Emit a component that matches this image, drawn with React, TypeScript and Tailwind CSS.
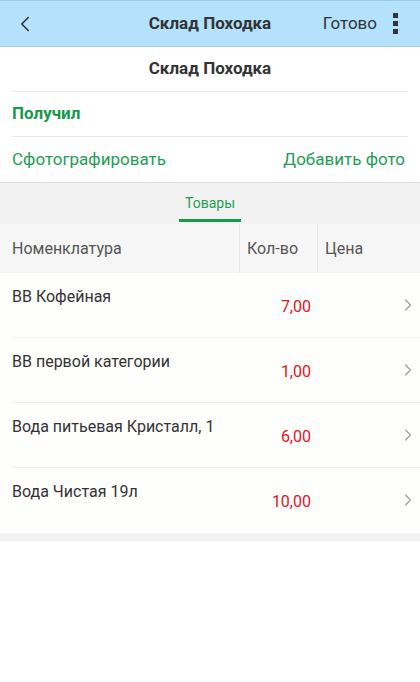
import { ChevronLeft, ChevronRight } from "lucide-react";

const items = [
  { name: "ВВ Кофейная", qty: "7,00" },
  { name: "ВВ первой категории", qty: "1,00" },
  { name: "Вода питьевая Кристалл, 1", qty: "6,00" },
  { name: "Вода Чистая 19л", qty: "10,00" },
];

export default function App() {
  return (
    <div className="min-h-[682px] w-[420px] bg-white font-['Roboto',sans-serif] text-[#333]">
      {/* toolbar */}
      <div className="grid h-[47px] grid-cols-[1fr_auto_1fr] items-center border-t border-b border-t-[#9ccbe8] border-b-[#a4cde6] bg-[#b4e1fc] px-3">
        <ChevronLeft size={26} strokeWidth={1.5} className="text-[#333]" />
        <div className="text-[17px] font-bold text-[#333]">Склад Походка</div>
        <div className="flex items-center justify-end">
          <span className="text-[17px] text-[#333]">Готово</span>
          <div className="ml-[16px] mr-[10px] flex flex-col gap-[3px]">
            <span className="block h-[5px] w-[5px] bg-[#333]" />
            <span className="block h-[5px] w-[5px] bg-[#333]" />
            <span className="block h-[5px] w-[5px] bg-[#333]" />
          </div>
        </div>
      </div>

      {/* doc info */}
      <div className="px-3">
        <div className="flex h-[45px] items-center justify-center border-b border-[#e8e8e8] text-[17px] font-bold">
          Склад Походка
        </div>
        <div className="flex h-[45px] items-center border-b border-[#e8e8e8] text-[17px] font-bold text-[#15994b]">
          Получил
        </div>
        <div className="flex h-[45px] items-center justify-between pr-[3px] text-[17px] text-[#1e9d55]">
          <span>Сфотографировать</span>
          <span>Добавить фото</span>
        </div>
      </div>

      {/* tabs */}
      <div className="flex h-[42px] justify-center border-t border-[#dedede] bg-[#f2f2f2]">
        <div className="flex flex-col items-center justify-end">
          <span className="px-[6px] pb-[5px] text-[14px] text-[#1e9d55]">Товары</span>
          <span className="mb-[2px] block h-[3px] w-[62px] bg-[#16994b]" />
        </div>
      </div>

      {/* table head */}
      <div className="flex h-[49px] items-center bg-[#f6f6f6] text-[16px] text-[#555]">
        <div className="flex h-full w-[240px] items-center border-r border-[#e6e6e6] pl-3">Номенклатура</div>
        <div className="flex h-full w-[78px] items-center border-r border-[#e6e6e6] pl-[7px]">Кол-во</div>
        <div className="flex h-full flex-1 items-center pl-[7px]">Цена</div>
      </div>

      {/* rows */}
      <div className="bg-[#fefefd]">
        {items.map((it, i) => (
          <div key={i} className="pl-3">
            <div
              className={
                "relative flex h-[65px] " + (i < items.length - 1 ? "border-b border-[#efefef]" : "")
              }
            >
              <div className="pt-[12px] text-[16px] text-[#333]">{it.name}</div>
              <div className="absolute right-[109px] top-[22px] text-[16px] text-[#e0141e]">{it.qty}</div>
              <ChevronRight
                size={20}
                strokeWidth={1.3}
                className="absolute right-[2px] top-[22px] text-[#9a9a9a]"
              />
            </div>
          </div>
        ))}
      </div>
      <div className="h-[8px] bg-[#f2f2f2]" />
    </div>
  );
}
